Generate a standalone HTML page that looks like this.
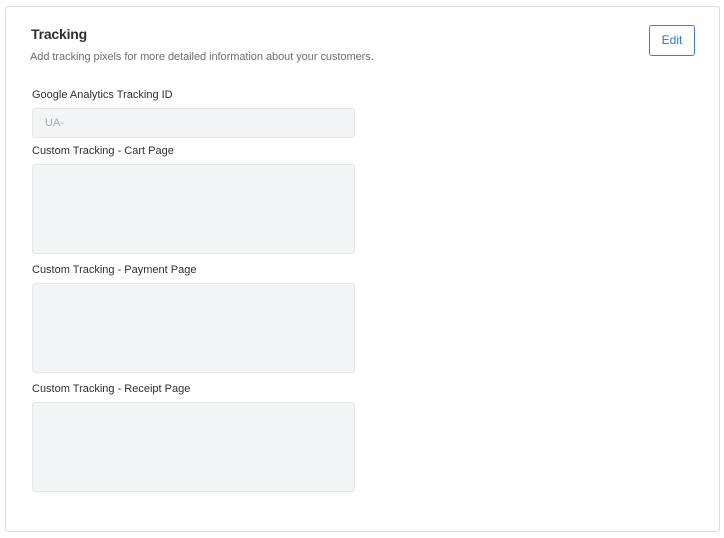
<!DOCTYPE html>
<html><head><style>
body{margin:0;background:#fff;font-family:"Liberation Sans",sans-serif;width:724px;height:538px;position:relative;overflow:hidden}
.card{position:absolute;left:5px;top:6px;width:713px;height:524px;border:1px solid #d9dadc;border-radius:3px;background:#fff}
.t{position:absolute;color:#2b2f36}
.box{position:absolute;left:32px;width:321px;background:#f3f4f6;border:1px solid #e6e7ea;border-radius:3px}
.btn{position:absolute;left:649px;top:25px;width:44px;height:29px;border:1px solid #3a78f2;border-radius:3px;color:#2f6df0;font-size:12px;line-height:29px;text-align:center}
</style></head><body>
<div class="card"></div>
<div class="t" style="left:31px;top:26px;font-size:14px;font-weight:bold;letter-spacing:-0.2px">Tracking</div>
<div class="t" style="left:30px;top:51px;font-size:11px;color:#6b6f76;letter-spacing:-0.05px">Add tracking pixels for more detailed information about your customers.</div>
<div class="btn">Edit</div>
<div class="t" style="left:32px;top:89px;font-size:11px">Google Analytics Tracking ID</div>
<div class="box" style="top:108px;height:28px"><span style="position:absolute;left:12px;top:8px;font-size:11px;color:#a4a7ad">UA-</span></div>
<div class="t" style="left:32px;top:145px;font-size:11px">Custom Tracking - Cart Page</div>
<div class="box" style="top:164px;height:88px"></div>
<div class="t" style="left:32px;top:264px;font-size:11px">Custom Tracking - Payment Page</div>
<div class="box" style="top:283px;height:88px"></div>
<div class="t" style="left:32px;top:383px;font-size:11px">Custom Tracking - Receipt Page</div>
<div class="box" style="top:402px;height:88px"></div>
</body></html>
